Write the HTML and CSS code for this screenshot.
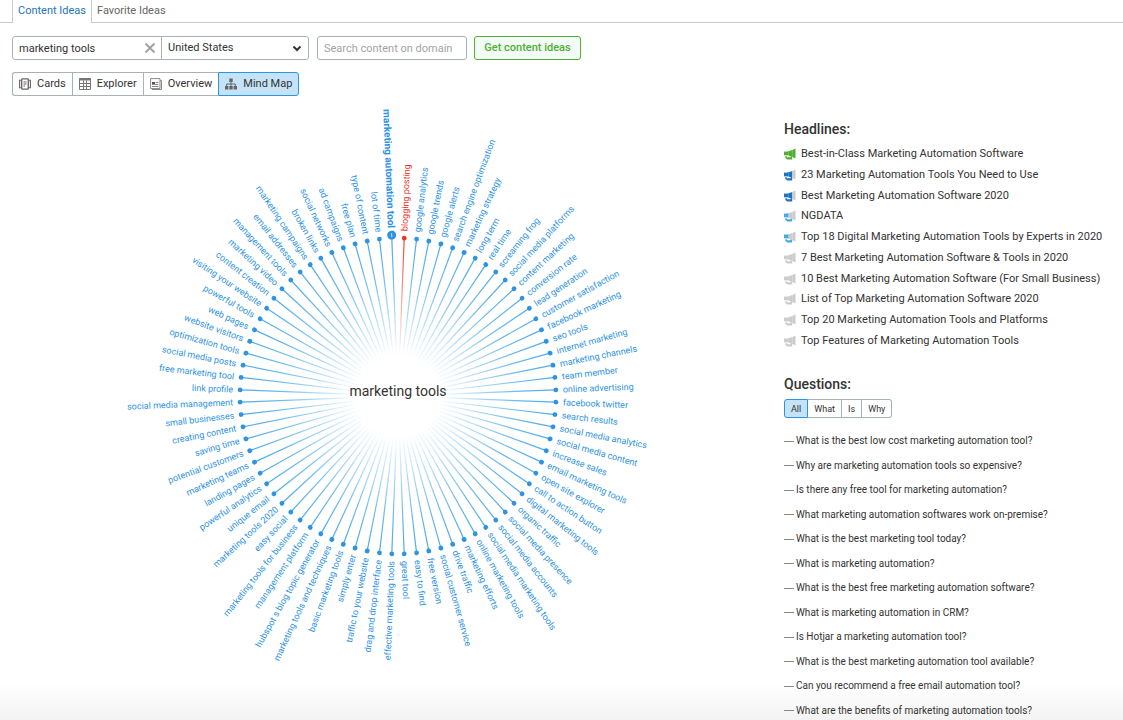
FILE: index.html
```html
<!DOCTYPE html>
<html lang="en">
<head>
<meta charset="utf-8">
<title>Content Ideas</title>
<link rel="stylesheet" href="styles.css">
</head>
<body>
<nav class="tabs" aria-label="Sections">
  <a class="tab tab-active" href="#ideas">Content Ideas</a>
  <a class="tab" href="#favorites">Favorite Ideas</a>
</nav>

<form class="search">
  <div class="joined">
    <div class="topic">
      <input class="topic-input" type="text" value="marketing tools" aria-label="Topic">
      <button class="clear" type="button" aria-label="Clear">
        <svg viewBox="0 0 12 12" width="12" height="12"><path d="M1.500 1.500l9 9M10.500 1.500l-9 9" fill="none" stroke="#a3a3a3" stroke-width="2"/></svg>
      </button>
    </div>
    <div class="country">
      <select class="country-select" aria-label="Country"><option>United States</option></select>
      <svg class="chevron" viewBox="0 0 10 8" width="10" height="8"><path d="M1.500 2.500L5 6l3.500-3.500" fill="none" stroke="#333" stroke-width="2"/></svg>
    </div>
  </div>
  <input class="domain" type="text" placeholder="Search content on domain" aria-label="Domain">
  <button class="submit" type="button">Get content ideas</button>
</form>

<div class="views">
  <button class="view" type="button">
    <svg viewBox="0 0 12 12" width="12" height="12" fill="none" stroke="#666"><rect x="2.700" y=".8" width="6.600" height="10.400" rx=".8" stroke-width="1.300"/><path d="M2.500 2.300H.6v7.400h1.900M9.500 2.300h1.900v7.400H9.500" stroke-width="1.100"/><path d="M4.500 4h3M4.500 6h3M4.500 8h1.500" stroke-width="1"/></svg>
    Cards
  </button>
  <button class="view" type="button">
    <svg viewBox="0 0 12 12" width="12" height="12" fill="none" stroke="#777"><path d="M.5.5h11v11H.5zM.5 5.500h11M.5 8.500h11M4.500 2.500v9M7.500 2.500v9"/><path d="M0 1.500h12" stroke-width="2"/></svg>
    Explorer
  </button>
  <button class="view" type="button">
    <svg viewBox="0 0 12 12" width="12" height="12" fill="none" stroke="#888"><path d="M.6.6h9.400v10H.6zM10 2.500h1.500v9H2"/><path d="M5.500 4.500h3M2 8.500h6.500M2 6.500h6.500" stroke="#888"/><path d="M2 5h3" stroke="#555" stroke-width="2"/></svg>
    Overview
  </button>
  <button class="view view-active" type="button">
    <svg viewBox="0 0 12 12" width="12" height="12" fill="#666"><path d="M4.300.5h3.400v3.400H4.300zM0 8h3.400v3.400H0zM4.300 8h3.400v3.400H4.300zM8.600 8H12v3.400H8.600z"/><path d="M6 3.500V8M1.700 8.500V6h8.600v2.500" fill="none" stroke="#666"/></svg>
    Mind Map
  </button>
</div>

<main class="content">
  <svg class="map" id="map" viewBox="-386 -290 772 580" role="img" aria-label="Mind map of marketing tools">
    <defs>
      <radialGradient id="fade" gradientUnits="userSpaceOnUse" cx="0" cy="0" r="157">
        <stop offset=".26" stop-color="#4baae6" stop-opacity="0"/>
        <stop offset=".5" stop-color="#4baae6" stop-opacity=".4"/>
        <stop offset=".75" stop-color="#4baae6" stop-opacity=".8"/>
        <stop offset="1" stop-color="#4baae6"/>
      </radialGradient>
      <radialGradient id="fade-red" gradientUnits="userSpaceOnUse" cx="0" cy="0" r="157">
        <stop offset=".26" stop-color="#e8453e" stop-opacity="0"/>
        <stop offset="1" stop-color="#e8453e"/>
      </radialGradient>
    </defs>
  </svg>

  <aside class="side">
    <svg class="symbols" width="0" height="0" aria-hidden="true">
      <symbol id="horn" viewBox="0 0 12 12">
        <path class="horn-tail" d="M0 3.300l1 .4 3.700-.4v4.200L1 7.200 0 7.500zM1.300 8.300h1.600v1h3.800V8.200h1.500v3.200H3.300L1.300 10z"/>
        <path class="horn-mid" d="M4.600 3.300L8.400 2v7L4.600 7.500z"/>
        <path class="horn-end" d="M8.300 2L11.500.4v10.200L8.300 9z"/>
      </symbol>
    </svg>
    <h2 class="title">Headlines:</h2>
    <ul class="headlines">
      <li class="headline"><svg class="horn horn-green"><use href="#horn"/></svg>Best-in-Class Marketing Automation Software</li>
      <li class="headline"><svg class="horn horn-blue"><use href="#horn"/></svg>23 Marketing Automation Tools You Need to Use</li>
      <li class="headline"><svg class="horn horn-blue"><use href="#horn"/></svg>Best Marketing Automation Software 2020</li>
      <li class="headline"><svg class="horn horn-sky"><use href="#horn"/></svg>NGDATA</li>
      <li class="headline"><svg class="horn horn-sky"><use href="#horn"/></svg>Top 18 Digital Marketing Automation Tools by Experts in 2020</li>
      <li class="headline"><svg class="horn"><use href="#horn"/></svg>7 Best Marketing Automation Software &amp; Tools in 2020</li>
      <li class="headline"><svg class="horn"><use href="#horn"/></svg>10 Best Marketing Automation Software (For Small Business)</li>
      <li class="headline"><svg class="horn"><use href="#horn"/></svg>List of Top Marketing Automation Software 2020</li>
      <li class="headline"><svg class="horn"><use href="#horn"/></svg>Top 20 Marketing Automation Tools and Platforms</li>
      <li class="headline"><svg class="horn"><use href="#horn"/></svg>Top Features of Marketing Automation Tools</li>
    </ul>

    <h2 class="title">Questions:</h2>
    <div class="filters">
      <button class="filter filter-active" type="button">All</button>
      <button class="filter" type="button">What</button>
      <button class="filter" type="button">Is</button>
      <button class="filter" type="button">Why</button>
    </div>
    <ul class="questions">
      <li class="question">What is the best low cost marketing automation tool?</li>
      <li class="question">Why are marketing automation tools so expensive?</li>
      <li class="question">Is there any free tool for marketing automation?</li>
      <li class="question">What marketing automation softwares work on-premise?</li>
      <li class="question">What is the best marketing tool today?</li>
      <li class="question">What is marketing automation?</li>
      <li class="question">What is the best free marketing automation software?</li>
      <li class="question">What is marketing automation in CRM?</li>
      <li class="question">Is Hotjar a marketing automation tool?</li>
      <li class="question">What is the best marketing automation tool available?</li>
      <li class="question">Can you recommend a free email automation tool?</li>
      <li class="question">What are the benefits of marketing automation tools?</li>
    </ul>
  </aside>
</main>
<script src="map.js"></script>
</body>
</html>
```
FILE: styles.css
```css
* { box-sizing: border-box; }
body {
  margin: 0;
  min-height: 100vh;
  font-family: Roboto, "Noto Sans", sans-serif;
  font-size: 11px;
  line-height: 16px;
  color: #333;
  background: linear-gradient(to top, #f3f3f3, #fff 36px) #fff;
}
button, input, select { font: inherit; color: inherit; margin: 0; }
button { cursor: pointer; }

.tabs { display: flex; height: 23px; padding-left: 12px; border-bottom: 1px solid #c9ccce; }
.tab { height: 22px; padding: 3px 5px; color: #666; text-decoration: none; }
.tab-active { height: 23px; color: #1e73be; background: #fff; border: solid #c9ccce; border-width: 0 1px; }

.search { display: flex; flex-wrap: wrap; padding: 13px 12px 12px; }
.joined { display: flex; width: 297px; height: 24px; margin-right: 8px; border: 1px solid #a6b3b6; border-radius: 3px; }
.topic { display: flex; align-items: center; width: 149px; border-right: 1px solid #a6b3b6; }
.topic-input { flex: 1; min-width: 0; height: 22px; padding: 0 6px; border: 0; background: none; outline: none; }
.clear { display: flex; padding: 0 5px; border: 0; background: none; }
.country { display: grid; flex: 1; align-items: center; }
.country-select { grid-area: 1 / 1; height: 22px; padding: 0 6px; border: 0; background: none; appearance: none; }
.chevron { grid-area: 1 / 1; justify-self: end; margin-right: 6px; pointer-events: none; }
.domain { width: 150px; height: 24px; margin-right: 7px; padding: 0 6px; border: 1px solid #a6b3b6; border-radius: 3px; background: #fff; }
.domain::placeholder { color: #a3a3a3; }
.submit { height: 24px; width: 107px; padding: 0; border: 1px solid #4fae33; border-radius: 3px; background: #f2fbf6; color: #4fae33; font-weight: 500; }

.views { display: flex; padding: 0 12px; }
.view { display: flex; align-items: center; gap: 6px; height: 24px; padding: 0 6px; border: 1px solid #a6b3b6; border-right-width: 0; background: #fff; }
.view:first-child { border-radius: 3px 0 0 3px; }
.view-active { border: 1px solid #2d93e3; border-radius: 0 3px 3px 0; background: #c4e3f8; }

.content { display: grid; grid-template-columns: minmax(0, 1fr) 327px; padding: 10px 12px 0; }
.map { display: block; width: 100%; overflow: visible; }
.map-line { stroke: url(#fade); stroke-width: 1.2; }
.map-dot, .map-label { fill: #2d93e3; }
.map-label { font-size: 9px; dominant-baseline: central; cursor: pointer; }
.map-current .map-label { font-size: 10px; font-weight: 700; }
.map-hot .map-line { stroke: url(#fade-red); }
.map-hot .map-dot, .map-hot .map-label { fill: #e8352e; }
.map-info { stroke: #c4e3f8; stroke-width: 1; }
.map-root { font-size: 14px; fill: #333; text-anchor: middle; }

.side { padding-top: 14px; }
.symbols { position: absolute; }
.title { margin: 0; font-size: 14px; line-height: 18px; font-weight: 500; }
.headlines, .questions { display: flex; flex-direction: column; justify-content: space-between; margin: 0; padding: 0; list-style: none; }
.headlines { min-height: 203px; margin: 8px 0 26px; }
.headline { display: flex; align-items: center; gap: 5px; white-space: nowrap; }
.horn { width: 12px; height: 12px; fill: #ccc; }
.horn-green { fill: #4fae33; }
.horn-tail { fill: var(--tail); }
.horn-mid { fill: var(--mid); }
.horn-blue { --tail: #1e73be; --mid: #1e73be; }
.horn-sky { --tail: #45a9e8; }
.filters { display: flex; padding: 6px 0 15px; }
.filter { height: 19px; padding: 0 6px; font-size: 9px; line-height: 16px; border: 1px solid #a6b3b6; border-left-width: 0; background: #fff; }
.filter:last-child { border-radius: 0 3px 3px 0; }
.filter-active { border: 1px solid #2d93e3; border-radius: 3px 0 0 3px; background: #c4e3f8; }
.questions { min-height: 286px; }
.question { display: flex; align-items: center; gap: 2px; font-size: 10px; white-space: nowrap; }
.question::before { content: ""; width: 10px; height: 1px; background: #888; }
```
FILE: map.js
```js
const labels = [
  "blogging posting", "google analytics", "google trends", "google alerts", "search engine optimization",
  "marketing strategy", "long term", "real time", "screaming frog", "social media platforms",
  "content marketing", "conversion rate", "lead generation", "customer satisfaction", "facebook marketing",
  "seo tools", "internet marketing", "marketing channels", "team member", "online advertising",
  "facebook twitter", "search results", "social media analytics", "social media content", "increase sales",
  "email marketing tools", "open site explorer", "call to action button", "digital marketing tools", "organic traffic",
  "social media presence", "social media accounts", "social media marketing tools", "online marketing tools", "marketing efforts",
  "drive traffic", "social customer service", "free version", "easy to find", "great tool",
  "effective marketing tools", "drag and drop interface", "traffic to your website", "simply enter", "basic marketing tools",
  "marketing tools and techniques", "hubspot s blog topic generator", "management platform", "marketing tools for business", "easy social",
  "marketing tools 2020", "unique email", "powerful analytics", "landing pages", "marketing teams",
  "potential customers", "saving time", "creating content", "small businesses", "social media management",
  "link profile", "free marketing tool", "social media posts", "optimization tools", "website visitors",
  "web pages", "powerful tools", "visiting your website", "content creation", "marketing video",
  "management tools", "email addresses", "marketing campaigns", "broken links", "social networks",
  "ad campaigns", "free plan", "type of content", "lot of time", "marketing automation tool"
];
const map = document.getElementById("map");

function add(parent, name, attrs, text) {
  const el = document.createElementNS("http://www.w3.org/2000/svg", name);
  for (const key in attrs) el.setAttribute(key, attrs[key]);
  if (text) el.textContent = text;
  parent.appendChild(el);
  return el;
}

const step = 360 / labels.length;
labels.forEach((label, i) => {
  const angle = (i + 0.5) * step - 90;
  const left = angle > 90;
  const current = i === labels.length - 1;
  const kind = i === 0 ? "map-hot" : current ? "map-current" : "";
  const group = add(map, "g", { class: kind, transform: `rotate(${angle})` });
  const radius = current ? 161 : 158;
  add(group, "line", { class: "map-line", x1: 36, y1: 0, x2: radius, y2: 0 });
  add(group, "circle", { class: "map-dot", cx: radius, cy: 0, r: current ? 4.5 : 2.4 });
  if (current) add(group, "path", { class: "map-info", d: "M159 0h4" });
  const start = current ? 168 : 165;
  add(group, "text", {
    class: "map-label",
    x: left ? -start : start,
    y: 0,
    "text-anchor": left ? "end" : "start",
    transform: left ? "rotate(180)" : "rotate(0)"
  }, label);
});
add(map, "text", { class: "map-root", x: 0, y: 0 }, "marketing tools");
```
